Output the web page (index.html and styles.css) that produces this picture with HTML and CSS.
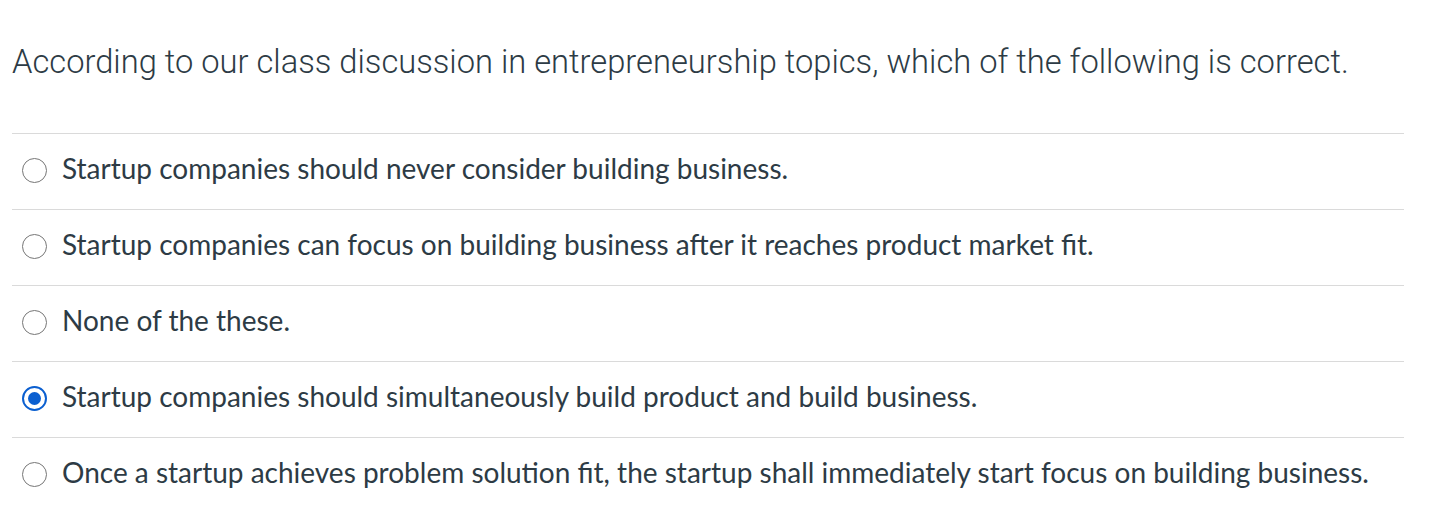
FILE: index.html
```html
<!DOCTYPE html>
<html>
<head>
<meta charset="utf-8">
<link rel="stylesheet" href="styles.css">
</head>
<body>
<div class="quiz">
  <div class="question">According to our class discussion in entrepreneurship topics, which of the following is correct.</div>
  <div class="answers">
    <label class="answer"><span class="radio"></span><span class="text">Startup companies should never consider building business.</span></label>
    <label class="answer"><span class="radio"></span><span class="text">Startup companies can focus on building business after it reaches product market fit.</span></label>
    <label class="answer"><span class="radio"></span><span class="text">None of the these.</span></label>
    <label class="answer"><span class="radio checked"></span><span class="text">Startup companies should simultaneously build product and build business.</span></label>
    <label class="answer"><span class="radio"></span><span class="text">Once a startup achieves problem solution fit, the startup shall immediately start focus on building business.</span></label>
  </div>
</div>
</body>
</html>
```

FILE: styles.css
```css
html, body {
  margin: 0;
  padding: 0;
  background: #ffffff;
}
.quiz {
  width: 1392px;
  margin-left: 12px;
}
.question {
  font-family: Roboto, "Liberation Sans", sans-serif;
  font-weight: 300;
  font-size: 32.7px;
  line-height: 40px;
  color: #2d3b45;
  padding-top: 42px;
  height: 133px;
  box-sizing: border-box;
  white-space: nowrap;
}
.answers {
  display: flex;
  flex-direction: column;
}
.answer {
  display: flex;
  align-items: center;
  height: 76px;
  border-top: 1.5px solid #dadada;
  box-sizing: border-box;
  padding-left: 10px;
  padding-bottom: 2px;
  gap: 15px;
}
.radio {
  width: 25px;
  height: 25px;
  box-sizing: border-box;
  border: 1.6px solid #767676;
  border-radius: 50%;
  flex: none;
  position: relative;
}
.radio.checked {
  border: 2.5px solid #0b5fd0;
}
.radio.checked::after {
  content: "";
  position: absolute;
  left: 3.5px;
  top: 3.5px;
  width: 13px;
  height: 13px;
  border-radius: 50%;
  background: #0b5fd0;
}
.text {
  font-family: Lato, "Liberation Sans", sans-serif;
  font-size: 28px;
  line-height: 34px;
  color: #2d3b45;
  white-space: nowrap;
  padding-bottom: 5px;
}
```
